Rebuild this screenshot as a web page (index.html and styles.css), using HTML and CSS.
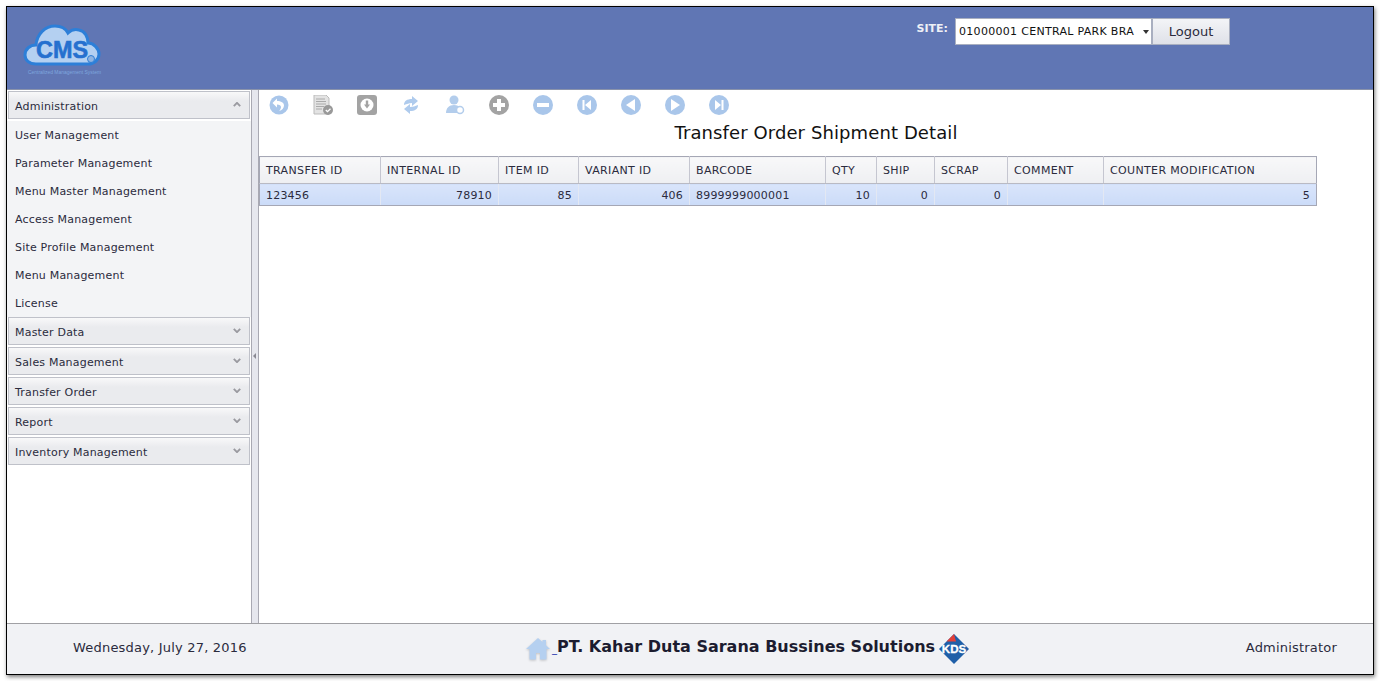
FILE: index.html
```html
<!DOCTYPE html>
<html lang="en">

<head>
    <meta charset="UTF-8">
    <title>Transfer Order Shipment Detail</title>
    <link rel="stylesheet" href="styles.css">
</head>

<body>
    <div class="frame">
        <header class="top">
            <svg class="logo" viewBox="0 0 80 54" width="80" height="54">
                <path d="M13 42C6 42 2 38 2 33C2 27 7 23 13 23C14 12 22 4 32 4C38 4 43 7 45 11C48 8 52 7 56 8C62 9 65 15 65 21C71 21 76 27 76 32C76 38 71 42 65 42Z" fill="#b4d0f1" stroke="#2d7fd8" stroke-width="3"/>
                <text class="logo-name" x="13" y="36" textLength="52" lengthAdjust="spacingAndGlyphs">CMS</text>
                <circle cx="68" cy="37" r="3.500" fill="#8fb3e0" stroke="#2d7fd8"/>
                <text class="logo-sub" x="5" y="52" textLength="73" lengthAdjust="spacingAndGlyphs">Centralized Management System</text>
            </svg>
            <div class="site">
                <span class="site-label">SITE:</span>
                <div class="site-select"><span class="site-value">01000001 CENTRAL PARK BRA</span><i class="caret"></i></div>
                <button class="logout">Logout</button>
            </div>
        </header>

        <div class="middle">
            <nav class="side">
                <div class="acc-head">Administration <svg class="chev" viewBox="0 0 10 6" width="8" height="5"><path d="M1 5l4-4 4 4" /></svg></div>
                <ul class="acc-list">
                    <li>User Management</li>
                    <li>Parameter Management</li>
                    <li>Menu Master Management</li>
                    <li>Access Management</li>
                    <li>Site Profile Management</li>
                    <li>Menu Management</li>
                    <li>License</li>
                </ul>
                <div class="acc-head">Master Data <svg class="chev" viewBox="0 0 10 6" width="8" height="5"><path d="M1 1l4 4 4-4" /></svg></div>
                <div class="acc-head">Sales Management <svg class="chev" viewBox="0 0 10 6" width="8" height="5"><path d="M1 1l4 4 4-4" /></svg></div>
                <div class="acc-head">Transfer Order <svg class="chev" viewBox="0 0 10 6" width="8" height="5"><path d="M1 1l4 4 4-4" /></svg></div>
                <div class="acc-head">Report <svg class="chev" viewBox="0 0 10 6" width="8" height="5"><path d="M1 1l4 4 4-4" /></svg></div>
                <div class="acc-head">Inventory Management <svg class="chev" viewBox="0 0 10 6" width="8" height="5"><path d="M1 1l4 4 4-4" /></svg></div>
            </nav>

            <div class="splitter"><i class="split-arrow"></i></div>

            <main class="content">
                <div class="toolbar">
                    <!-- undo -->
                    <svg viewBox="0 0 20 20"><circle cx="10" cy="10" r="9.500" fill="#a9c6ea"/><path d="M8 3.500L3.500 8 8 12.500V9.500c2.500 0 4 1 4 2.500 0 1.500-1 3-2 4 3-.5 5-3 5-5.500 0-3-3-4.500-7-4.500z" fill="#fff"/></svg>
                    <!-- document check -->
                    <svg viewBox="0 0 20 20"><path d="M1 0h12l3 3v16H1z" fill="#e3e3e3" stroke="#bbb"/><path d="M3 4h9M3 6.500h10M3 9h10M3 11.500h8M3 14h6" stroke="#aaa" fill="none"/><circle cx="15" cy="15" r="5" fill="#999"/><path d="M12.800 15l1.700 1.700 3-3" stroke="#fff" stroke-width="1.300" fill="none"/></svg>
                    <!-- save -->
                    <svg viewBox="0 0 20 20"><rect width="20" height="20" rx="3" fill="#a3a3a3"/><circle cx="10" cy="10" r="6.500" fill="#fff"/><path d="M8.800 5.500h2.400v4H13l-3 4-3-4h1.800z" fill="#a3a3a3"/></svg>
                    <!-- refresh -->
                    <svg viewBox="0 0 20 20"><path d="M3 10C3 6 6 4 11 4V1L17 6 11 11V8C8 8 6 9 3 10z" fill="#afcbed"/><path d="M17 10C17 14 14 16 9 16V19L3 14 9 9V12C12 12 14 11 17 10z" fill="#afcbed"/></svg>
                    <!-- user -->
                    <svg viewBox="0 0 20 20"><circle cx="9" cy="5" r="4.500" fill="#b3cdec"/><path d="M1 18c0-5 3-8 8-8 3 0 5 1 6 3l-2 5z" fill="#b3cdec"/><circle cx="15" cy="15" r="3.500" fill="#fff" stroke="#b3cdec" stroke-width="1.500"/></svg>
                    <!-- add -->
                    <svg viewBox="0 0 20 20"><circle cx="10" cy="10" r="10" fill="#a3a3a3"/><path d="M10 4v12M4 10h12" stroke="#fff" stroke-width="4"/></svg>
                    <!-- remove -->
                    <svg viewBox="0 0 20 20"><circle cx="10" cy="10" r="10" fill="#a9c6ea"/><path d="M4 10h12" stroke="#fff" stroke-width="4"/></svg>
                    <!-- first -->
                    <svg viewBox="0 0 20 20"><circle cx="10" cy="10" r="10" fill="#a9c6ea"/><path d="M14 5v10l-6-5zM5.500 5h2v10h-2z" fill="#fff"/></svg>
                    <!-- previous -->
                    <svg viewBox="0 0 20 20"><circle cx="10" cy="10" r="10" fill="#a9c6ea"/><path d="M14 4v12l-9-6z" fill="#fff"/></svg>
                    <!-- next -->
                    <svg viewBox="0 0 20 20"><circle cx="10" cy="10" r="10" fill="#a9c6ea"/><path d="M6 4v12l9-6z" fill="#fff"/></svg>
                    <!-- last -->
                    <svg viewBox="0 0 20 20"><circle cx="10" cy="10" r="10" fill="#a9c6ea"/><path d="M6 5v10l6-5zM12.500 5h2v10h-2z" fill="#fff"/></svg>
                </div>

                <h1 class="title">Transfer Order Shipment Detail</h1>

                <table class="grid">
                    <thead>
                        <tr>
                            <th class="c1">TRANSFER ID</th>
                            <th class="c2">INTERNAL ID</th>
                            <th class="c3">ITEM ID</th>
                            <th class="c4">VARIANT ID</th>
                            <th class="c5">BARCODE</th>
                            <th class="c6">QTY</th>
                            <th class="c7">SHIP</th>
                            <th class="c8">SCRAP</th>
                            <th class="c9">COMMENT</th>
                            <th class="c10">COUNTER MODIFICATION</th>
                        </tr>
                    </thead>
                    <tbody>
                        <tr>
                            <td>123456</td>
                            <td class="num">78910</td>
                            <td class="num">85</td>
                            <td class="num">406</td>
                            <td>8999999000001</td>
                            <td class="num">10</td>
                            <td class="num">0</td>
                            <td class="num">0</td>
                            <td></td>
                            <td class="num">5</td>
                        </tr>
                    </tbody>
                </table>
            </main>
        </div>

        <footer class="bottom">
            <span class="date">Wednesday, July 27, 2016</span>
            <div class="company">
                <svg class="home" viewBox="0 0 24 22" width="24" height="22"><path d="M12 0L0 11h3.500v10.500h6.500V15h4v6.500h6.500V11H24l-4-3.700V2h-3.500v2.100z" fill="#b5d0f0"/></svg>
                <span class="company-name"><span class="dash">_</span>PT. Kahar Duta Sarana Bussines Solutions</span>
                <svg class="kds" viewBox="0 0 30 30" width="30" height="30">
                    <path d="M15 0L30 15 15 30 0 15z" fill="#1f5fa8"/>
                    <path d="M15 0L7.500 7.500H17z" fill="#e2403a"/>
                    <text class="kds-text" x="15" y="19" text-anchor="middle">KDS</text>
                </svg>
            </div>
            <span class="user">Administrator</span>
        </footer>
    </div>
</body>

</html>
```

FILE: styles.css
```css
html,
body {
    margin: 0;
    padding: 0;
    background: #fff;
}

body {
    padding: 6px;
    font-family: "DejaVu Sans", Verdana, sans-serif;
    font-size: 11px;
    color: #2b2b3d;
}

.frame {
    display: flex;
    flex-direction: column;
    width: 1366px;
    height: 667px;
    border: 1px solid #000;
    box-shadow: 1px 2px 4px rgba(0, 0, 0, 0.5);
    overflow: hidden;
}

/* header */

.top {
    display: flex;
    justify-content: space-between;
    align-items: flex-start;
    flex: 0 0 83px;
    box-sizing: border-box;
    background-color: #6076b4;
    border-bottom: 1px solid #8a93ab;
}

.logo {
    margin: 15px 0 0 16px;
}

.logo-name {
    font-family: "Liberation Sans", Arial, sans-serif;
    font-size: 24px;
    font-weight: bold;
    fill: #2570cf;
    stroke: #2570cf;
    stroke-width: 0.6px;
}

.logo-sub {
    font-family: "Liberation Sans", Arial, sans-serif;
    font-size: 4.500px;
    fill: #7fa6de;
}

.site {
    display: flex;
    align-items: flex-start;
    margin: 11px 143px 0 0;
}

.site-label {
    margin: 4px 7px 0 0;
    color: #eef0f6;
    font-weight: bold;
}

.site-select {
    display: flex;
    align-items: center;
    justify-content: space-between;
    box-sizing: border-box;
    width: 197px;
    height: 27px;
    padding: 0 2px 0 3px;
    background: #fff;
    border: 1px solid #a9afc0;
    color: #111;
}

.site-value {
    letter-spacing: 0.3px;
    white-space: nowrap;
}

.caret {
    border-top: 4px solid #333;
    border-left: 3.500px solid transparent;
    border-right: 3.500px solid transparent;
}

.logout {
    box-sizing: border-box;
    width: 78px;
    height: 27px;
    padding: 0;
    border: 1px solid #a9afc0;
    background: linear-gradient(#f3f4f7, #dfe1e8);
    font-family: inherit;
    font-size: 13px;
    color: #2b2b3d;
}

/* middle */

.middle {
    display: flex;
    flex: 1;
    min-height: 0;
}

.side {
    flex: 0 0 244px;
    box-sizing: border-box;
    padding: 1px 1px 0;
    background: #fff;
}

.acc-head {
    display: flex;
    align-items: center;
    justify-content: space-between;
    box-sizing: border-box;
    height: 28px;
    margin-bottom: 2px;
    padding: 2px 8px 0 6px;
    border: 1px solid #bfc1c9;
    background: linear-gradient(#f8f8f9, #eaebee 35%, #eaebee);
    color: #2b2b3d;
    letter-spacing: 0.2px;
}

.chev {
    margin-top: -3px;
    fill: none;
    stroke: #9a9aa0;
    stroke-width: 2.400;
}

.acc-list {
    list-style: none;
    margin: 0 -1px;
    padding: 0;
    background: #f3f4f6;
}

.acc-list li {
    height: 28px;
    padding-left: 8px;
    line-height: 30px;
    letter-spacing: 0.2px;
}

.splitter {
    display: flex;
    align-items: center;
    flex: 0 0 6px;
    background: #e6e7ee;
    border-left: 1px solid #a9a9b3;
    border-right: 1px solid #a9a9b3;
}

.split-arrow {
    margin: 0 0 0 1px;
    border-right: 3px solid #8a8a94;
    border-top: 3px solid transparent;
    border-bottom: 3px solid transparent;
    position: relative;
    top: -1px;
}

.content {
    flex: 1;
    min-width: 0;
}

.toolbar {
    display: flex;
    gap: 24px;
    padding: 5px 0 0 10px;
    height: 25px;
}

.toolbar svg {
    width: 20px;
    height: 20px;
}

.title {
    margin: 2px 0 12px;
    height: 22px;
    font-size: 18px;
    line-height: 22px;
    font-weight: normal;
    letter-spacing: 0.1px;
    text-align: center;
    color: #111;
}

.grid {
    table-layout: fixed;
    width: 1058px;
    border-collapse: collapse;
    border: 1px solid #a5a7b5;
}

.grid th {
    box-sizing: border-box;
    height: 27px;
    padding: 0 6px;
    background: linear-gradient(#f8f8f9, #eeeff2);
    border-right: 1px solid #c5c6d0;
    border-bottom: 1px solid #b9bac4;
    font-weight: normal;
    text-align: left;
    color: #2b2b3d;
    letter-spacing: 0.35px;
    white-space: nowrap;
}

.grid td {
    box-sizing: border-box;
    height: 22px;
    padding: 1px 6px 0;
    background: linear-gradient(#d9e5fb, #cbdbf8);
    border-right: 1px solid #e3e8f3;
    border-bottom: 1px solid #a5a7b5;
    letter-spacing: 0.2px;
}

.grid td.num {
    text-align: right;
}

.grid th:last-child,
.grid td:last-child {
    border-right: 1px solid #a5a7b5;
}

.c1 { width: 121px; }
.c2 { width: 118px; }
.c3 { width: 80px; }
.c4 { width: 111px; }
.c5 { width: 136px; }
.c6 { width: 51px; }
.c7 { width: 58px; }
.c8 { width: 73px; }
.c9 { width: 96px; }

/* footer */

.bottom {
    display: flex;
    align-items: center;
    flex: 0 0 51px;
    box-sizing: border-box;
    padding: 0 36px 4px 66px;
    background: #f1f2f5;
    border-top: 1px solid #a0a0a4;
}

.date,
.user {
    font-size: 13px;
    letter-spacing: 0.2px;
}

.date {
    flex: 0 0 453px;
}

.user {
    margin-left: auto;
}

.company {
    display: flex;
    align-items: center;
    margin-bottom: 2px;
}

.home {
    margin-top: 6px;
    filter: drop-shadow(0 1px 1px rgba(0, 0, 0, 0.2));
}

.dash {
    margin-left: 2px;
    font-size: 10px;
    font-weight: normal;
    color: #2233aa;
}

.company-name {
    font-size: 16px;
    font-weight: bold;
    color: #1c1c30;
}

.kds {
    margin: 6px 0 0 4px;
}

.kds-text {
    font-family: "Liberation Sans", Arial, sans-serif;
    font-size: 11.500px;
    font-weight: bold;
    fill: #fff;
    stroke: #fff;
    stroke-width: 0.3px;
}
```
